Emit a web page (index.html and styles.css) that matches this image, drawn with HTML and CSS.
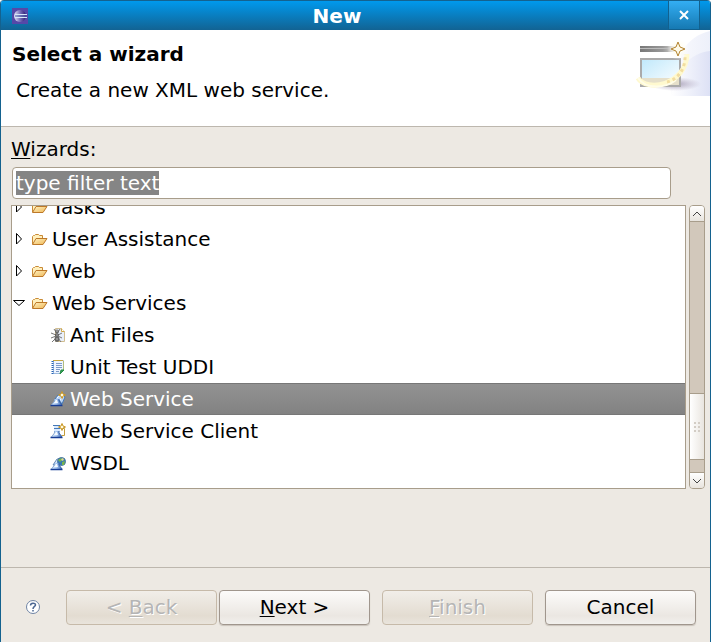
FILE: index.html
```html
<!DOCTYPE html>
<html lang="en">
<head>
<meta charset="utf-8">
<meta name="viewport" content="width=device-width, initial-scale=1">
<title>New</title>
<link rel="stylesheet" href="styles.css">
</head>
<body>
<svg class="defs" aria-hidden="true">
  <defs>
    <linearGradient id="fold" x2="1" y2="1"><stop offset="0" stop-color="#fff3c4"/><stop offset="1" stop-color="#efb653"/></linearGradient>
    <linearGradient id="flask" x2="1" y2="0"><stop offset="0" stop-color="#e8f3ff"/><stop offset=".5" stop-color="#a9c8f0"/><stop offset="1" stop-color="#3763b5"/></linearGradient>
    <linearGradient id="planet" x2="1" y2="0"><stop offset="0" stop-color="#e4e8f8"/><stop offset=".5" stop-color="#7770bb"/><stop offset="1" stop-color="#2b1b70"/></linearGradient>
    <linearGradient id="sky" x2="1" y2="1"><stop offset="0" stop-color="#bfe8fb"/><stop offset="1" stop-color="#fff"/></linearGradient>
    <linearGradient id="bar" x2="1" y2="0"><stop offset="0" stop-color="#777"/><stop offset=".6" stop-color="#999"/><stop offset="1" stop-color="#e2e0dc"/></linearGradient>
    <linearGradient id="swoosh" x2="1" y2="0"><stop offset="0" stop-color="#fff"/><stop offset="1" stop-color="#dde1f5"/></linearGradient>
    <linearGradient id="sweep" x2="1" y2="0"><stop offset="0" stop-color="#fbfbfe"/><stop offset="1" stop-color="#edf0fa"/></linearGradient>
    <radialGradient id="shade"><stop offset="0" stop-color="#a8a0b8"/><stop offset="1" stop-color="#b8b0c8" stop-opacity="0"/></radialGradient>
    <radialGradient id="glow"><stop offset="0" stop-color="#fffdf0"/><stop offset=".5" stop-color="#fffdf0" stop-opacity=".7"/><stop offset="1" stop-color="#fff" stop-opacity="0"/></radialGradient>
    <symbol id="folder" viewBox="0 0 16 13">
      <path d="M.5 11V3.500l1-1h1l1-1h3l1 1h3v3" fill="#fff0bd" stroke="#c98a35"/>
      <path d="M.5 11.500 4 5.500h11L11 11.500z" fill="url(#fold)" stroke="#bd7828"/>
    </symbol>
    <symbol id="closed" viewBox="0 0 14 14"><path d="M4.500 1.500v10.500L9.500 7z" fill="#fff" stroke="#000"/></symbol>
    <symbol id="open" viewBox="0 0 14 14"><path d="M1.500 4.500h11L7 9.500z" fill="#fff" stroke="#000"/></symbol>
    <symbol id="ant" viewBox="0 0 16 16">
      <path d="M5.500 1.500h6l3 3v10h-9z" fill="#e8effb" stroke="#d0bd90"/>
      <path d="M11.500 1.500v3h3" fill="#fff" stroke="#d2a844"/>
      <path d="m4 2 2 3m4-3L8 5M1 6l5 2m6-2L8 8M1 11l5-2m6 2L8 9M2 15l4-4m5 4-3-4" stroke="#777" fill="none"/>
      <circle cx="7" cy="4.500" r="2" fill="#666"/><circle cx="7" cy="8" r="1.800" fill="#444"/><ellipse cx="7" cy="12" rx="2.500" ry="3" fill="#666"/>
      <path d="M6 4h2M6 8h2M6 12h2" stroke="#bbb"/>
    </symbol>
    <symbol id="page" viewBox="0 0 16 16">
      <path d="M3.500 1.500h10v10l-3 3h-7z" fill="#eef5ff" stroke="#9ebbe1"/>
      <path d="M3 1.500h10" stroke="#c7a53d"/><path d="M13.500 2v9" stroke="#b3bd80"/>
      <path d="M6 4.500h6M6 6.500h6M6 8.500h6M6 10.500h4M6 12.500h3" stroke="#7d9bc8"/>
      <path d="M2.500 2v13" stroke="#2764b5" stroke-width="2" stroke-dasharray="1 1"/>
      <path d="m10 15 4-4h-3z" fill="#32a255" stroke="#278b45"/>
    </symbol>
    <symbol id="lab" viewBox="0 0 16 16">
      <path d="M5 8h4v2l3 4v1H1v-1l4-4z" fill="url(#flask)"/>
      <path d="M9 8v2l3 4" fill="none" stroke="#3763a8"/>
      <path d="M4.500 8v2l-3 4" fill="none" stroke="#8aabd5"/>
      <path d="M.5 14.500h12" stroke="#173d96" stroke-width="1.500"/><path d="m4 12 2-3h1l1 3z" fill="#f6fbff"/>
    </symbol>
    <symbol id="spark" viewBox="0 0 8 8"><path d="m4 .5 1 2.500 2.500 1L5 5 4 7.500 3 5 .5 4 3 3z" fill="#fffbe0" stroke="#c89420"/></symbol>
    <symbol id="service" viewBox="0 0 16 16">
      <path d="m5 8 3-4h4l3 2-3 7-3-4z" fill="#bdd5f4" stroke="#4779b6"/><path d="m7 7 3-3m0 5 4-4" stroke="#f5faff"/>
      <use href="#lab"/><use href="#spark" x="8" width="8" height="8"/>
    </symbol>
    <symbol id="client" viewBox="0 0 16 16">
      <path d="M10.500 5.500h4v7h-3" fill="#fff" stroke="#c49c39"/><path d="M4 2h6v7H4z" fill="#d9eaff"/><path d="M3 2.500h7M4 5.500h6" stroke="#4779b6"/>
      <use href="#lab"/><use href="#spark" x="8" width="8" height="8"/>
    </symbol>
    <symbol id="wsdl" viewBox="0 0 16 16">
      <path d="m3 10 4-6h4l-2 6z" fill="#d5e6fa" stroke="#6688b5"/>
      <circle cx="11.500" cy="6.500" r="4" fill="#3778b5" stroke="#47779c"/><path d="m8 5 3-2 1 2-2 2zm4 2 3-1-1 4h-2z" fill="#77b54b"/><path d="m11 4 2-1 1 2-2 1z" fill="#e0d98b"/>
      <use href="#lab"/>
    </symbol>
  </defs>
</svg>
<main class="window">
  <div class="titlebar">
    <svg class="app-icon" viewBox="0 0 16 16" aria-hidden="true">
      <path d="M0 0h16v16H0z" fill="#5548a8"/><circle cx="8" cy="8" r="6" fill="url(#planet)"/>
      <path d="M3 6.500h12M3 9.500h12" stroke="#d7e7f9"/><path d="M3 8h11" stroke="#5d72b4"/>
    </svg>
    <h1 class="title">New</h1>
    <button class="close" type="button" aria-label="Close"><svg viewBox="0 0 10 10" aria-hidden="true"><path d="m1 1 8 8m0-8L1 9" stroke="#fff" stroke-width="2"/></svg></button>
  </div>
  <header class="banner">
    <div class="intro"><h2>Select a wizard</h2><p>Create a new XML web service.</p></div>
    <svg class="banner-art" viewBox="0 0 75 66" aria-hidden="true">
      <path d="M36 66C36 28 52 6 75 1v65z" fill="url(#sweep)"/>
      <path d="M36 66C40 38 56 23 75 21v45z" fill="url(#swoosh)"/>
      <ellipse cx="40" cy="54" rx="26" ry="7" fill="url(#shade)"/>
      <path d="M5 16h41v41H5z" fill="#fff"/><path d="M5 16h38v6H5z" fill="url(#bar)"/>
      <path d="M5 18.500h34" stroke="#bbb"/>
      <path d="M6 29h39v27H6z" fill="url(#sky)" stroke="#aaa" stroke-width="2"/><path d="M7 48h37v7H7z" fill="#e5dfca"/>
      <path d="M3 48c8 14 48 8 49-24" fill="none" stroke="#fff9cf" stroke-width="5"/>
      <path d="M3 48c8 12 28 10 38 2" fill="none" stroke="#fffde8" stroke-width="2"/>
      <path d="M32 52c9-2 19-11 18-28" fill="none" stroke="#f2dda0" stroke-width="3" stroke-dasharray="3 3"/>
      <circle cx="43" cy="19" r="11" fill="url(#glow)"/>
      <path d="m43 12 2 5 5 2-5 2-2 5-2-5-5-2 5-2z" fill="#fffbe9" stroke="#b38330"/>
    </svg>
  </header>
  <section class="content">
    <label for="filter"><u>W</u>izards:</label>
    <input id="filter" class="filter" type="text" value="type filter text" autofocus>
    <div class="browser">
      <ul class="tree" role="tree" aria-label="Wizards">
        <li role="treeitem" aria-expanded="false"><svg class="arrow"><use href="#closed"/></svg><svg class="folder"><use href="#folder"/></svg>Tasks</li>
        <li role="treeitem" aria-expanded="false"><svg class="arrow"><use href="#closed"/></svg><svg class="folder"><use href="#folder"/></svg>User Assistance</li>
        <li role="treeitem" aria-expanded="false"><svg class="arrow"><use href="#closed"/></svg><svg class="folder"><use href="#folder"/></svg>Web</li>
        <li role="treeitem" aria-expanded="true"><svg class="arrow"><use href="#open"/></svg><svg class="folder"><use href="#folder"/></svg>Web Services</li>
        <li class="child" role="treeitem"><svg class="file"><use href="#ant"/></svg>Ant Files</li>
        <li class="child" role="treeitem"><svg class="file"><use href="#page"/></svg>Unit Test UDDI</li>
        <li class="child selected" role="treeitem" aria-selected="true"><svg class="file"><use href="#service"/></svg>Web Service</li>
        <li class="child" role="treeitem"><svg class="file"><use href="#client"/></svg>Web Service Client</li>
        <li class="child" role="treeitem"><svg class="file"><use href="#wsdl"/></svg>WSDL</li>
      </ul>
      <div class="scrollbar">
        <button type="button" aria-label="Scroll up"><svg viewBox="0 0 10 6"><path d="m1 5 4-4 4 4"/></svg></button>
        <div class="track"><div class="thumb"><svg viewBox="0 0 8 10"><path d="M1 1h8M1 5h8M1 9h8"/></svg></div></div>
        <button type="button" aria-label="Scroll down"><svg viewBox="0 0 10 6"><path d="m1 1 4 4 4-4"/></svg></button>
      </div>
    </div>
  </section>
  <footer class="actions">
    <button class="help" type="button" aria-label="Help"><svg viewBox="0 0 16 16"><circle cx="8" cy="8" r="6.500" fill="#fff" stroke="#6f84a5"/><path d="M5.500 6.500C5.500 3.500 10.500 3.500 10.500 6c0 1.500-2.500 1.500-2.500 4m0 1v1.500" fill="none" stroke="#4c6792" stroke-width="1.500"/></svg></button>
    <div class="steps"><button class="push" type="button" disabled>&lt; <u>B</u>ack</button><button class="push" type="button"><u>N</u>ext &gt;</button></div>
    <button class="push" type="button" disabled><u>F</u>inish</button>
    <button class="push" type="button">Cancel</button>
  </footer>
</main>
<script src="script.js"></script>
</body>
</html>
```
FILE: styles.css
```css
* { box-sizing: border-box; }
body { margin: 0; background: #fff; color: #000; font: 20px/24px "DejaVu Sans", sans-serif; }
h1, h2, p, ul { margin: 0; padding: 0; }
h1, h2 { font-size: 20px; line-height: 24px; }
button, input { font: inherit; color: inherit; margin: 0; }
svg { display: block; flex: none; }
.defs { position: absolute; width: 0; height: 0; }
.window { display: flex; flex-direction: column; min-height: 100vh; border: solid #14628f; border-width: 0 1px; border-radius: 4px 4px 0 0; background: #ede9e3; overflow: hidden; }
.titlebar { display: flex; align-items: center; height: 30px; padding-left: 11px; border-top: 1px solid #14628f; background: linear-gradient(#0099ed, #126393); color: #fff; }
.app-icon { width: 16px; height: 16px; }
.title { flex: 1; text-align: center; padding-right: 22px; }
.close { display: grid; place-items: center; align-self: stretch; width: 32px; margin-right: 10px; padding: 0; border: solid #12618f; border-width: 0 1px 1px; background: linear-gradient(#33aef3, #1679b2); }
.close svg { width: 10px; height: 10px; }
.banner { display: flex; justify-content: space-between; height: 97px; border-bottom: 1px solid #bdb7ae; background: #fff; }
.intro { padding: 12px 0 0 11px; }
.intro p { padding: 12px 0 0 4px; }
.banner-art { width: 75px; height: 66px; }
.content { flex: 1; padding: 10px 5px 0 10px; }
.content label { display: block; }
u { text-decoration-thickness: 1px; text-underline-offset: 2px; }
.filter { display: block; width: calc(100% - 35px); height: 32px; margin: 6px 0 6px 1px; padding: 0 3px; border: 1px solid #a89d8b; border-radius: 4px; outline: 0; background: #fff; }
.filter::selection { background: #858585; color: #fff; }
.browser { display: flex; gap: 3px; height: 284px; }
.tree { display: flex; flex: 1; flex-direction: column; justify-content: flex-end; padding-bottom: 9px; border: 1px solid #a89d8b; background: #fff; list-style: none; overflow: hidden; }
.tree li { display: flex; flex: none; align-items: center; height: 32px; }
.arrow { width: 14px; height: 14px; margin-right: 6px; }
.folder { width: 16px; height: 13px; margin-right: 4px; }
.tree .child { padding-left: 38px; }
.file { width: 16px; height: 16px; margin-right: 4px; }
.selected { border: solid #777; border-width: 1px 0; background: linear-gradient(#929292, #828282); color: #fff; }
.scrollbar { display: flex; flex-direction: column; width: 16px; border: 1px solid #a89d8b; border-radius: 4px; overflow: hidden; }
.scrollbar button { display: grid; place-items: center; height: 15px; padding: 0; border: 0; background: linear-gradient(#fff, #e8e4de); }
.scrollbar button svg { width: 10px; height: 6px; fill: none; stroke: #444; stroke-width: 1; }
.track { display: flex; flex: 1; flex-direction: column; justify-content: flex-end; padding-bottom: 12px; border: solid #a89d8b; border-width: 1px 0; background: #d2c8bb; }
.thumb { display: grid; place-items: center; height: 67px; border: solid #a89d8b; border-width: 1px 0; background: linear-gradient(90deg, #fff, #e9e5df); }
.thumb svg { width: 8px; height: 10px; stroke: #d3cdc5; stroke-width: 2; stroke-dasharray: 2 2; }
.actions { display: flex; align-items: center; gap: 12px; height: 75px; padding: 4px 14px 0 24px; border-top: 1px solid #bdb7ae; }
.help { width: 16px; height: 16px; margin-right: auto; padding: 0; border: 0; background: none; }
.steps { display: flex; gap: 2px; }
.push { width: 151px; height: 35px; padding: 0; border: 1px solid #a0968d; border-radius: 4px; background: linear-gradient(#fcfbfa, #ebe7e2 75%, #f2f0ed); box-shadow: 0 1px 1px #c9c3bb; }
.push:disabled { border-color: #c6baa9; background: linear-gradient(#f1eee9, #e3dcd1 75%, #e9e4dc); color: #b5b5b5; text-shadow: 1px 1px #fff; box-shadow: none; }
```
FILE: script.js
```js
document.getElementById("filter").select();
```
